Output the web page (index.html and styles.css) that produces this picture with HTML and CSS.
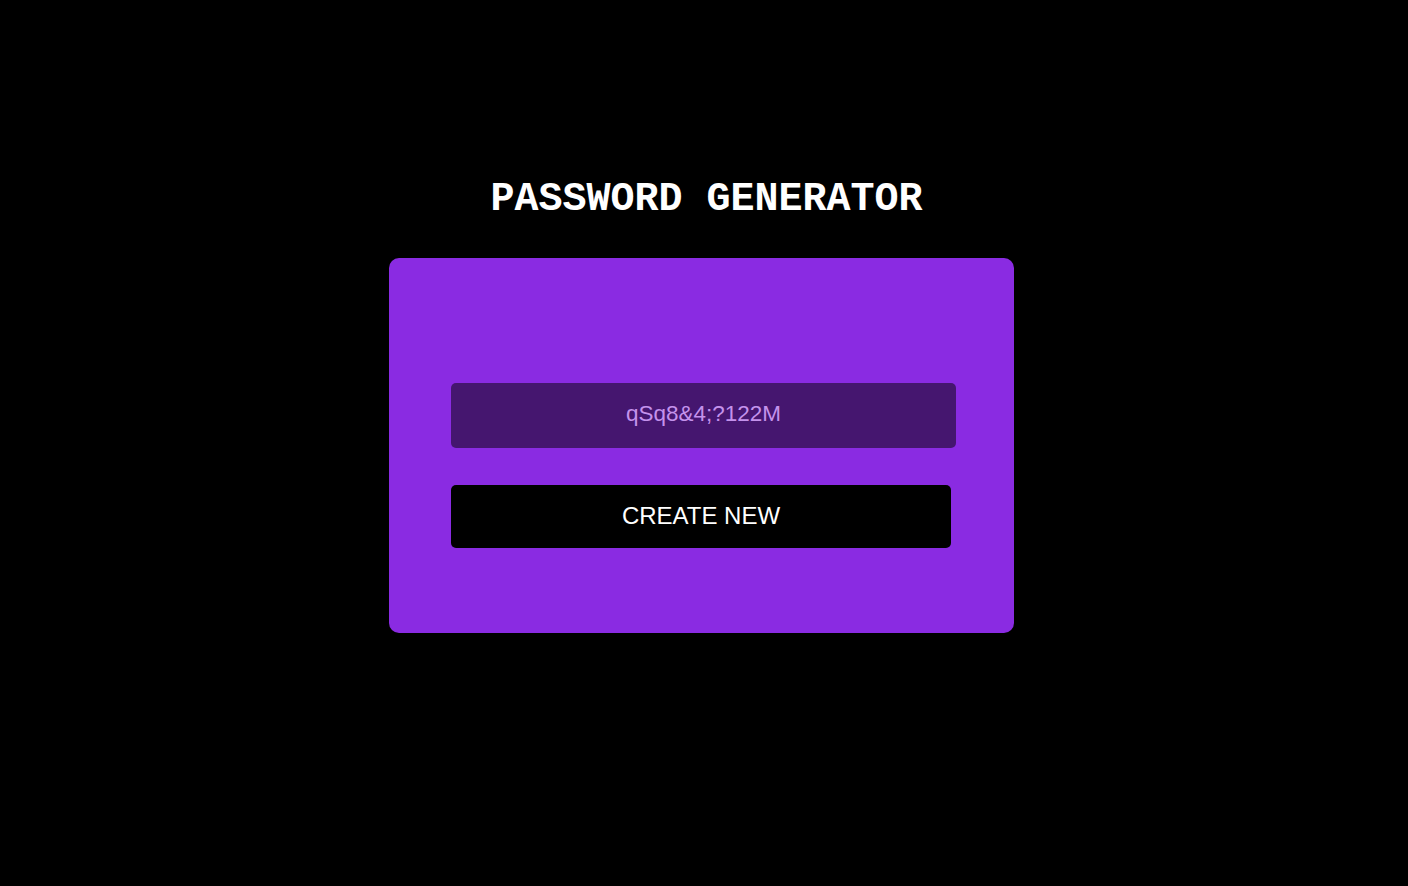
FILE: index.html
```html
<!DOCTYPE html>
<html>
<head>
<meta charset="utf-8">
<link rel="stylesheet" href="styles.css">
</head>
<body>
<main class="page">
  <h1 class="title">PASSWORD GENERATOR</h1>
  <section class="card">
    <div class="password">qSq8&amp;4;?122M</div>
    <button class="create">CREATE NEW</button>
  </section>
</main>
</body>
</html>
```

FILE: styles.css
```css
html, body {
  margin: 0;
  padding: 0;
  background: #000;
  height: 100%;
}
.page {
  display: flex;
  flex-direction: column;
  align-items: center;
  padding-top: 176px;
  padding-right: 5px;
}
.title {
  margin: 0 0 0 10px;
  font-family: "Courier New", Courier, "Liberation Mono", monospace;
  font-weight: bold;
  font-size: 40px;
  line-height: 48px;
  color: #fff;
}
.card {
  margin-top: 34px;
  width: 625px;
  height: 375px;
  box-sizing: border-box;
  background: #8a2be2;
  border-radius: 10px;
  padding: 125px 0 0 62px;
  display: flex;
  flex-direction: column;
  align-items: flex-start;
}
.password {
  width: 505px;
  height: 65px;
  box-sizing: border-box;
  padding-bottom: 3px;
  border-radius: 5px;
  background: #45166f;
  color: #c492ec;
  font-family: "Liberation Sans", Arial, sans-serif;
  font-size: 22.5px;
  display: flex;
  align-items: center;
  justify-content: center;
}
.create {
  margin-top: 37px;
  width: 500px;
  height: 63px;
  border: none;
  border-radius: 5px;
  background: #000;
  color: #fff;
  font-family: "Liberation Sans", Arial, sans-serif;
  font-size: 24px;
  padding: 0 0 2px;
}
```
